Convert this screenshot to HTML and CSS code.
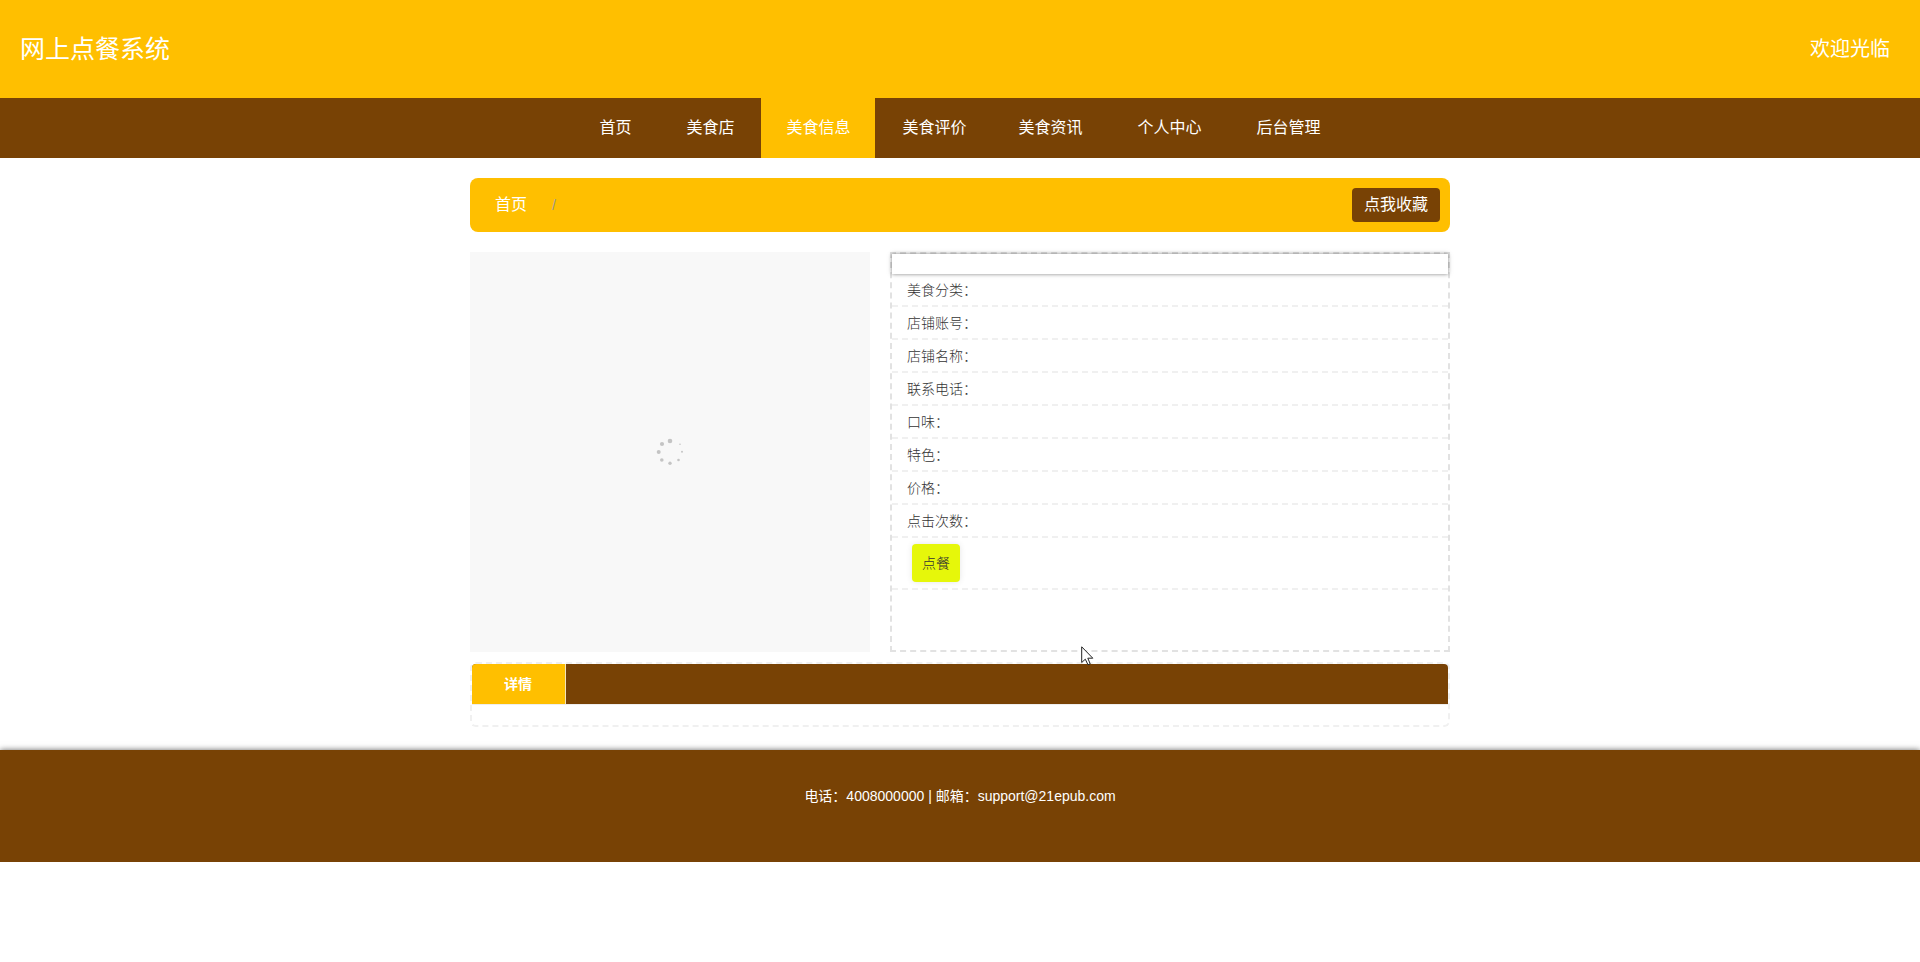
FILE: index.html
```html
<!DOCTYPE html>
<html lang="zh-CN">
<head>
<meta charset="utf-8">
<meta name="viewport" content="width=device-width, initial-scale=1">
<title>网上点餐系统</title>
<link rel="stylesheet" href="styles.css">
</head>
<body>
<header class="header">
  <h1 class="brand">网上点餐系统</h1>
  <span class="welcome">欢迎光临</span>
</header>
<nav class="nav">
  <a class="nav-link" href="#">首页</a>
  <div class="nav-group">
    <a class="nav-link" href="#">美食店</a>
    <a class="nav-link active" href="#" aria-current="page">美食信息</a>
    <a class="nav-link" href="#">美食评价</a>
    <a class="nav-link" href="#">美食资讯</a>
  </div>
  <a class="nav-link" href="#">个人中心</a>
  <a class="nav-link" href="#">后台管理</a>
</nav>
<main class="container">
  <div class="crumbs">
    <a class="crumb" href="#">首页</a>
    <span class="separator">/</span>
    <button class="favorite" type="button">点我收藏</button>
  </div>
  <div class="product">
    <div class="gallery">
      <svg class="loader" viewBox="0 0 32 32" aria-hidden="true">
        <circle cx="16" cy="5" r="2.3"/>
        <circle cx="8" cy="8" r="2.1"/>
        <circle cx="4.700" cy="16" r="2"/>
        <circle cx="7.800" cy="24" r="1.800"/>
        <circle cx="16" cy="27.300" r="1.700"/>
        <circle cx="24.500" cy="24" r="1.300"/>
        <circle cx="28" cy="15.700" r="1"/>
        <circle cx="26" cy="8.300" r=".8"/>
      </svg>
    </div>
    <section class="info">
      <div class="info-title"></div>
      <div class="row">美食分类：</div>
      <div class="row">店铺账号：</div>
      <div class="row">店铺名称：</div>
      <div class="row">联系电话：</div>
      <div class="row">口味：</div>
      <div class="row">特色：</div>
      <div class="row">价格：</div>
      <div class="row">点击次数：</div>
      <div class="row row-action"><button class="order" type="button">点餐</button></div>
      <svg class="pointer" viewBox="0 0 13 20" aria-hidden="true">
        <path d="M.7 .8V16.500L4.300 13.200L7 18.800L9.200 17.800L6.800 12.200H11.800Z"/>
      </svg>
    </section>
  </div>
  <section class="detail">
    <div class="tabs"><button class="tab" type="button">详情</button></div>
    <div class="tab-body"></div>
  </section>
</main>
<footer class="footer">电话：4008000000 | 邮箱：support@21epub.com</footer>
</body>
</html>
```
FILE: styles.css
```css
* {
  box-sizing: border-box;
}
body {
  margin: 0;
  background: #fff;
  color: #333;
  font: 14px/24px "Liberation Sans", "Noto Sans CJK SC", sans-serif;
}
a {
  color: inherit;
  text-decoration: none;
}
button {
  border: 0;
  font-family: inherit;
  cursor: pointer;
}
.header {
  display: flex;
  align-items: center;
  justify-content: space-between;
  height: 98px;
  padding: 0 30px 0 20px;
  background: #ffbf00;
  color: #fff;
}
.brand {
  margin: 0;
  font-size: 25px;
  font-weight: 400;
}
.welcome {
  font-size: 20px;
}
.nav {
  display: flex;
  justify-content: center;
  gap: 5px;
  background: #784205;
  color: #fff;
}
.nav-group {
  display: flex;
  gap: 2px;
}
.nav-link {
  padding: 0 25px;
  font-size: 16px;
  line-height: 60px;
}
.nav-link.active {
  background: #ffbf00;
}
.container {
  max-width: 980px;
  margin: 20px auto 22px;
}
.crumbs {
  display: flex;
  align-items: center;
  gap: 25px;
  padding: 10px 10px 10px 25px;
  border-radius: 8px;
  background: #ffbf00;
  color: #fff;
}
.crumb {
  font-size: 16px;
}
.separator {
  color: #999;
  font-size: 14px;
}
.favorite {
  margin-left: auto;
  padding: 0 12px;
  border-radius: 4px;
  background: #784205;
  color: #fff;
  font-size: 16px;
  line-height: 34px;
}
.product {
  display: flex;
  gap: 20px;
  margin: 20px 0 10px;
}
.gallery {
  display: flex;
  align-items: center;
  justify-content: center;
  width: 400px;
  height: 400px;
  background: #f8f8f8;
}
.loader {
  width: 32px;
  height: 32px;
  fill: #c4c4c4;
}
.info {
  position: relative;
  flex: 1;
  border: 2px dashed #e2e2e2;
}
.info-title {
  height: 20px;
  box-shadow: 0 0 4px rgba(0, 0, 0, 0.5);
}
.row {
  padding: 4px 15px 3px;
  border-bottom: 2px dashed #f0f0f0;
  font-weight: 300;
}
.row-action {
  display: flex;
  padding: 6px 20px;
}
.order {
  padding: 0 10px;
  border-radius: 4px;
  background: #e6f70a;
  color: #333;
  font-size: 14px;
  font-weight: 300;
  line-height: 38px;
  box-shadow: 0 0 6px rgba(0, 0, 0, 0.1);
}
.pointer {
  position: absolute;
  top: 392px;
  left: 189px;
  width: 13px;
  height: 20px;
  fill: #fff;
  stroke: #222;
}
.detail {
  border: 2px dashed #f0f0f0;
  border-radius: 6px;
}
.tabs {
  display: flex;
  border-bottom: 1px solid #eee;
  border-radius: 4px 4px 0 0;
  background: #784205;
}
.tab {
  padding: 0 33px 0 32px;
  border-right: 1px solid #f3e3bb;
  border-radius: 4px 0 0 0;
  background: #ffbf00;
  color: #fff;
  font-size: 14px;
  font-weight: 700;
  line-height: 40px;
}
.tab-body {
  min-height: 20px;
}
.footer {
  padding: 34px 20px 54px;
  background: #784205;
  color: #fff;
  text-align: center;
  box-shadow: 0 0 6px rgba(0, 0, 0, 0.6);
}
.container + .footer {
  margin-top: 23px;
}
```
